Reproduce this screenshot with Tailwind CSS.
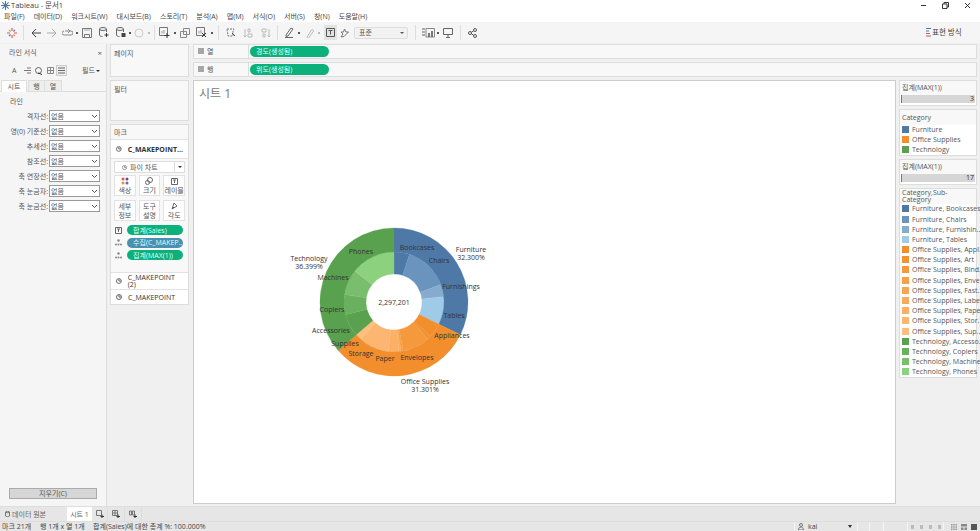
<!DOCTYPE html>
<html lang="ko">
<head>
    <meta charset="UTF-8">
    <meta name="viewport" content="width=device-width, initial-scale=1.0">
    <title>Tableau - 문서1</title>
    <script src="https://cdn.jsdelivr.net/npm/@tailwindcss/browser@4"></script>
</head>
<body class="w-[980px] h-[531px] overflow-hidden flex flex-col bg-[#f0f0f0] text-[7px] leading-none text-[#555] font-['Open_Sans','Noto_Sans_CJK_KR',sans-serif]">

    <!-- title bar -->
    <div class="h-[11px] bg-white flex items-center pl-[1px] shrink-0 relative">
        <svg class="w-[9px] h-[9px]" viewBox="0 0 10 10" fill="none" stroke="#4e79a7" stroke-width="1.2"><path d="M5 0v10M0 5h10M1.5 1.5l7 7M8.5 1.5l-7 7"/></svg>
        <span class="ml-[1px] text-[7.5px] text-[#444]">Tableau - 문서1</span>
        <div class="ml-auto flex items-center gap-[15px] pr-[9px] text-[#333]">
            <svg class="w-[7px] h-[7px]" viewBox="0 0 7 7" stroke="currentColor"><path d="M1 3.5h5"/></svg>
            <svg class="w-[7px] h-[7px]" viewBox="0 0 7 7" stroke="currentColor" fill="none"><path d="M.5 2h4.500v4.500h-4.500zM2 2V.5h4.500V5H5"/></svg>
            <svg class="w-[7px] h-[7px]" viewBox="0 0 7 7" stroke="currentColor"><path d="M1 1l5 5M6 1l-5 5"/></svg>
        </div>
    </div>

    <!-- menu -->
    <div class="h-[11px] bg-white flex items-center gap-[9px] pl-[4px] shrink-0 text-[7px] text-[#444]">
        <span>파일(F)</span><span>데이터(D)</span><span>워크시트(W)</span><span>대시보드(B)</span><span>스토리(T)</span><span>분석(A)</span><span>맵(M)</span><span>서식(O)</span><span>서버(S)</span><span>창(N)</span><span>도움말(H)</span>
    </div>

    <!-- toolbar -->
    <div class="h-[21px] bg-[#f5f5f5] flex items-center shrink-0 relative text-[#777]">
        <svg class="w-[10px] h-[10px] ml-[7px]" viewBox="0 0 10 10" stroke-width="1.200" fill="none"><path d="M5 0v3M5 7v3M0 5h3M7 5h3" stroke="#e15759"/><path d="M2 2l1.500 1.500M8 8L6.500 6.500" stroke="#f28e2b"/><path d="M8 2L6.500 3.500M2 8l1.500-1.500" stroke="#4e79a7"/></svg>
        <div class="w-px h-[15px] bg-[#ddd] ml-[6px]"></div>
        <svg class="w-[10px] h-[10px] ml-[7px]" viewBox="0 0 10 10" fill="none" stroke="#444"><path d="M10 5H1M5 1L1 5l4 4"/></svg>
        <svg class="w-[10px] h-[10px] ml-[6px]" viewBox="0 0 10 10" fill="none" stroke="#aaa"><path d="M0 5h9M5 1l4 4-4 4"/></svg>
        <svg class="w-[11px] h-[10px] ml-[5px]" viewBox="0 0 11 10" fill="none" stroke="#888"><path d="M3 3H9a1.500 1.500 0 010 4H2a1.500 1.500 0 010-4M6 1l2 2-2 2"/></svg>
        <span class="w-[2px] h-[2px] bg-[#555] ml-[3px]"></span>
        <svg class="w-[10px] h-[10px] ml-[4px]" viewBox="0 0 10 10" fill="none" stroke="#777"><path d="M.5.5h9v9h-9zM2.500 6.500h5v3h-5z"/><path d="M2 2h6" stroke="#aaa"/></svg>
        <svg class="w-[10px] h-[11px] ml-[7px]" viewBox="0 0 10 11" fill="none" stroke="#666"><ellipse cx="4" cy="2" rx="3.500" ry="1.500"/><path d="M.5 2v6c0 1 1.500 1.500 3 1.500M7.500 2v3"/><path d="M7.500 6v4M5.500 8h4" stroke="#333"/></svg>
        <svg class="w-[10px] h-[11px] ml-[7px]" viewBox="0 0 10 11" fill="none" stroke="#666"><ellipse cx="4" cy="2" rx="3.500" ry="1.500"/><path d="M.5 2v6c0 1 1.500 1.500 3 1.500M7.500 2v3"/><path d="M5.500 6h4v4h-4z" fill="#444" stroke="none"/></svg>
        <span class="w-[2px] h-[2px] bg-[#555] ml-[3px]"></span>
        <svg class="w-[10px] h-[10px] ml-[3px]" viewBox="0 0 10 10" fill="none" stroke="#ccc"><circle cx="5" cy="5" r="4"/></svg>
        <span class="w-[2px] h-[2px] bg-[#bbb] ml-[4px]"></span>
        <div class="w-px h-[15px] bg-[#ddd] ml-[4px]"></div>
        <svg class="w-[11px] h-[11px] ml-[4px]" viewBox="0 0 11 11" fill="none" stroke="#777"><path d="M.5.5h8v8h-8z"/><path d="M3 6.500V4M5 6.500V3" stroke="#999"/><path d="M8 6v5M5.500 8.500h5" stroke="#333"/></svg>
        <span class="w-[2px] h-[2px] bg-[#555] ml-[4px]"></span>
        <svg class="w-[10px] h-[10px] ml-[4px]" viewBox="0 0 10 10" fill="none" stroke="#888"><path d="M3.500.5h6v6h-6zM.5 3.500h6v6h-6z"/></svg>
        <svg class="w-[11px] h-[11px] ml-[6px]" viewBox="0 0 11 11" fill="none" stroke="#777"><path d="M.5.5h8v8h-8z"/><path d="M3 6.500V4M5 6.500V3" stroke="#999"/><path d="M6 6l4 4M10 6l-4 4" stroke="#333"/></svg>
        <span class="w-[2px] h-[2px] bg-[#555] ml-[4px]"></span>
        <div class="w-px h-[15px] bg-[#ddd] ml-[5px]"></div>
        <svg class="w-[10px] h-[10px] ml-[7px]" viewBox="0 0 10 10" fill="none" stroke="#777"><path d="M1 1h7l-1 2v5H2z" stroke-dasharray="2 1"/><path d="M6 5l3 3" stroke="#444"/></svg>
        <svg class="w-[10px] h-[10px] ml-[7px]" viewBox="0 0 10 10" fill="none" stroke="#bbb"><path d="M2 1v8M.5 7.500L2 9l1.500-1.500M5 1h2v3H5zM5 6h4v3H5z"/></svg>
        <svg class="w-[10px] h-[10px] ml-[8px]" viewBox="0 0 10 10" fill="none" stroke="#bbb"><path d="M8 1v8M6.500 7.500L8 9l1.500-1.500M1 1h4v3H1zM2 6h2v3H2z"/></svg>
        <div class="w-px h-[15px] bg-[#ddd] ml-[6px]"></div>
        <svg class="w-[11px] h-[11px] ml-[6px]" viewBox="0 0 11 11" fill="none" stroke="#666"><path d="M2 8L7 1l2 1-5 7-2 .5zM1 10.500h8"/></svg>
        <span class="w-[2px] h-[2px] bg-[#555] ml-[3px]"></span>
        <svg class="w-[10px] h-[10px] ml-[4px]" viewBox="0 0 10 10" fill="none" stroke="#bbb"><path d="M3 9L7.500 2a1.200 1.200 0 012 1L5 9.500a1 1 0 01-2-.5z"/></svg>
        <span class="w-[2px] h-[2px] bg-[#bbb] ml-[4px]"></span>
        <div class="w-[13px] h-[15px] bg-[#e2e2e2] ml-[4px] flex items-center justify-center">
            <svg class="w-[9px] h-[9px]" viewBox="0 0 9 9" fill="none" stroke="#555"><path d="M.5.500h8v8h-8zM2.500 2.500h4M4.500 2.500v4"/></svg>
        </div>
        <svg class="w-[9px] h-[10px] ml-[3px]" viewBox="0 0 9 10" fill="none" stroke="#777"><path d="M4.500 1L6 4h2.500L6.500 6 4 8.500 1 9l2-3-2-2h2.500z"/></svg>
        <div class="w-[54px] h-[12px] ml-[5px] border border-[#ddd] rounded-[2px] bg-[#f2f2f2] flex items-center pl-[4px] pr-[3px] text-[#555]">표준<span class="ml-auto w-0 h-0 border-x-[2px] border-x-transparent border-t-[2px] border-t-[#555]"></span></div>
        <div class="w-px h-[15px] bg-[#ddd] ml-[7px]"></div>
        <svg class="w-[13px] h-[10px] ml-[6px]" viewBox="0 0 13 10" fill="#aaa"><path d="M0 0h3v2H0zM0 3h3v2H0zM0 6h3v2H0z"/><path d="M4 .5h8.500v8.500H4z" fill="none" stroke="#888"/><path d="M6 5h2v4H6zM9 3h2v6H9z" fill="#777"/></svg>
        <span class="w-[2px] h-[2px] bg-[#555] ml-[2px]"></span>
        <svg class="w-[10px] h-[10px] ml-[4px]" viewBox="0 0 10 10" fill="none" stroke="#666"><path d="M.5.500h9v6h-9zM5 6.500v3M3 9.500h4"/></svg>
        <div class="w-px h-[15px] bg-[#ddd] ml-[7px]"></div>
        <svg class="w-[9px] h-[10px] ml-[7px]" viewBox="0 0 9 10" fill="none" stroke="#555"><circle cx="2" cy="5" r="1.500"/><circle cx="7" cy="2" r="1.500"/><circle cx="7" cy="8" r="1.500"/><path d="M3.300 4.300L5.700 2.700M3.300 5.700l2.400 1.600"/></svg>
        <svg class="w-[5px] h-[9px] ml-[449px]" viewBox="0 0 5 9"><path d="M0 0h5v1H0z" fill="#4e79a7"/><path d="M0 2.500h3v1H0z" fill="#4e79a7"/><path d="M0 5h4v1H0z" fill="#e15759"/><path d="M0 7.500h5v1H0z" fill="#777"/></svg>
        <span class="ml-[1px] text-[7.5px] text-[#444]">표현 방식</span>
    </div>

    <!-- main area -->
    <div class="flex-1 min-h-0 flex pt-px">
        <!-- format lines panel -->
        <div class="w-[107px] shrink-0 bg-[#f5f5f5] border-r border-[#ddd] flex flex-col pb-[7px]">
            <div class="h-[15px] flex items-center pl-[9px] pr-[4px] mt-[1px] text-[#555]">라인 서식<span class="ml-auto text-[8px]">×</span></div>
            <div class="h-[19px] flex items-center pl-[12px] pr-[6px] mt-[1px]">
                <span class="w-[11px]">A</span>
                <svg class="w-[7px] h-[7px] ml-[1px]" viewBox="0 0 7 7" stroke="#777"><path d="M3 1h4M0 3.500h7M3 6h4"/></svg>
                <svg class="w-[8px] h-[8px] ml-[4px]" viewBox="0 0 8 8" fill="none" stroke="#666"><circle cx="3.500" cy="3.500" r="3"/><path d="M3 6l4 1.500" stroke="#333"/></svg>
                <svg class="w-[7px] h-[7px] ml-[4px]" viewBox="0 0 7 7" fill="none" stroke="#888"><path d="M.5.500h6v6h-6zM3.500.5v6M.5 3.500h6"/></svg>
                <span class="w-[11px] h-[11px] ml-[2px] border border-[#ccc] bg-[#eee] flex items-center justify-center"><svg class="w-[7px] h-[7px]" viewBox="0 0 7 7" stroke="#666"><path d="M0 1h7M0 3.500h7M0 6h7"/></svg></span>
                <span class="ml-auto flex items-center gap-px">필드<span class="w-0 h-0 border-x-[2px] border-x-transparent border-t-[2px] border-t-[#333]"></span></span>
            </div>
            <div class="h-[12px] flex items-end border-b border-[#ddd] pl-px">
                <span class="w-[26px] h-[12px] bg-white border-x border-t border-[#ddd] flex items-center justify-center -mb-px">시트</span>
                <span class="w-[17px] h-[11px] ml-px bg-[#eee] border-x border-t border-[#ddd] flex items-center justify-center">행</span>
                <span class="w-[17px] h-[11px] bg-[#eee] border-r border-t border-[#ddd] flex items-center justify-center">열</span>
            </div>
            <div class="pl-[10px] pt-[6px] text-[#555]">라인</div>
            <div id="lineRows" class="flex flex-col gap-[3px] mt-[5px]"></div>
            <div class="mt-auto mx-[9px] h-[11px] bg-[#d6d6d6] border border-[#aaa] flex items-center justify-center">지우기(C)</div>
        </div>

        <!-- pages / filters / marks -->
        <div class="w-[79px] ml-[3px] shrink-0 flex flex-col gap-[3px]">
            <div class="h-[33px] bg-[#f8f8f8] border border-[#ddd] pl-[3px] pt-[5px]">페이지</div>
            <div class="h-[41px] bg-[#f8f8f8] border border-[#ddd] pl-[3px] pt-[5px]">필터</div>
            <div class="h-[181px] bg-[#f8f8f8] border border-[#ddd] flex flex-col">
                <div class="h-[14px] pl-[3px] flex items-center">마크</div>
                <div class="h-[20px] border-t border-b border-[#e2e2e2] flex items-center px-[5px] bg-white">
                    <svg class="w-[6px] h-[6px]" viewBox="0 0 6 6" fill="none" stroke="#666"><circle cx="3" cy="3" r="2.500"/><path d="M3 3V1M3 3h2"/></svg>
                    <span class="ml-[6px] font-bold text-[#333]">C_MAKEPOINT...</span>
                </div>
                <div class="h-[12px] mx-[3px] mt-[2px] bg-white border border-[#ddd] flex items-center pl-[7px]">
                    <svg class="w-[5px] h-[5px]" viewBox="0 0 6 6" fill="none" stroke="#888"><circle cx="3" cy="3" r="2.500"/><path d="M3 3V1M3 3h2"/></svg>
                    <span class="ml-[3px]">파이 차트</span>
                    <span class="ml-auto w-[10px] h-full border-l border-[#ddd] flex items-center justify-center"><span class="w-0 h-0 border-x-[2px] border-x-transparent border-t-[2px] border-t-[#333]"></span></span>
                </div>
                <div class="grid grid-cols-3 gap-x-[3px] gap-y-[4px] mx-[3px] mt-[2px] text-center">
                    <div class="h-[21px] bg-white border border-[#e2e2e2] flex flex-col items-center justify-center gap-[2px]">
                        <svg class="w-[8px] h-[8px]" viewBox="0 0 8 8"><circle cx="2" cy="2" r="1.500" fill="#e15759"/><circle cx="6" cy="2" r="1.500" fill="#76428a"/><circle cx="2" cy="6" r="1.500" fill="#f28e2b"/><circle cx="6" cy="6" r="1.500" fill="#4e79a7"/></svg>
                        색상
                    </div>
                    <div class="h-[21px] bg-white border border-[#e2e2e2] flex flex-col items-center justify-center gap-[2px]">
                        <svg class="w-[8px] h-[8px]" viewBox="0 0 8 8" fill="none" stroke="#666"><circle cx="5" cy="3" r="2.500"/><circle cx="2.500" cy="5.500" r="2"/></svg>
                        크기
                    </div>
                    <div class="h-[21px] bg-white border border-[#e2e2e2] flex flex-col items-center justify-center gap-[2px]">
                        <svg class="w-[7px] h-[7px]" viewBox="0 0 7 7" fill="none" stroke="#666"><path d="M.5.500h6v6h-6zM2 2h3M3.500 2v3"/></svg>
                        레이블
                    </div>
                    <div class="h-[21px] bg-white border border-[#e2e2e2] flex items-center justify-center leading-[9px]">세부<br>정보</div>
                    <div class="h-[21px] bg-white border border-[#e2e2e2] flex items-center justify-center leading-[9px]">도구<br>설명</div>
                    <div class="h-[21px] bg-white border border-[#e2e2e2] flex flex-col items-center justify-center gap-[2px]">
                        <svg class="w-[7px] h-[8px]" viewBox="0 0 7 8" fill="none" stroke="#666"><path d="M1 7L3 1l3 3zM1 7l2-2"/></svg>
                        각도
                    </div>
                </div>
                <div class="flex flex-col gap-[2.500px] mt-[4px] ml-[4px]">
                    <div class="flex items-center">
                        <svg class="w-[7px] h-[7px]" viewBox="0 0 7 7" fill="none" stroke="#666"><path d="M.5.500h6v6h-6zM2 2h3M3.500 2v3"/></svg>
                        <span class="ml-[5px] w-[56px] h-[10px] rounded-full bg-[#0bb07b] text-[#dff] pl-[6px] flex items-center">합계(Sales)</span>
                    </div>
                    <div class="flex items-center">
                        <svg class="w-[7px] h-[7px]" viewBox="0 0 7 7" fill="#888"><circle cx="3.500" cy="1.500" r="1.200"/><circle cx="1" cy="5.500" r="1"/><circle cx="3.500" cy="5.500" r="1"/><circle cx="6" cy="5.500" r="1"/></svg>
                        <span class="ml-[5px] w-[56px] h-[10px] rounded-full bg-[#4a90b0] text-[#dff] pl-[6px] flex items-center">수집(C_MAKEP..</span>
                    </div>
                    <div class="flex items-center">
                        <svg class="w-[7px] h-[7px]" viewBox="0 0 7 7" fill="#888"><circle cx="3.500" cy="1.500" r="1.200"/><circle cx="1" cy="5.500" r="1"/><circle cx="3.500" cy="5.500" r="1"/><circle cx="6" cy="5.500" r="1"/></svg>
                        <span class="ml-[5px] w-[56px] h-[10px] rounded-full bg-[#0bb07b] text-[#dff] pl-[6px] flex items-center">집계(MAX(1))</span>
                    </div>
                </div>
                <div class="mt-auto h-[17px] border-t border-[#e2e2e2] flex items-center px-[5px] bg-white">
                    <svg class="w-[6px] h-[6px]" viewBox="0 0 6 6" fill="none" stroke="#666"><circle cx="3" cy="3" r="2.500"/><path d="M3 3V1M3 3h2"/></svg>
                    <span class="ml-[6px] text-[#333]">C_MAKEPOINT (2)</span>
                </div>
                <div class="h-[15px] border-t border-[#e2e2e2] flex items-center px-[5px] bg-white">
                    <svg class="w-[6px] h-[6px]" viewBox="0 0 6 6" fill="none" stroke="#666"><circle cx="3" cy="3" r="2.500"/><path d="M3 3V1M3 3h2"/></svg>
                    <span class="ml-[6px] text-[#333]">C_MAKEPOINT</span>
                </div>
            </div>
        </div>

        <!-- shelves + sheet + legends -->
        <div class="flex-1 min-w-0 ml-[4px] mr-[3px] flex flex-col gap-[3px]">
            <div class="h-[15px] bg-[#f8f8f8] border border-[#ddd] flex items-center">
                <div class="w-[55px] h-full border-r border-[#ddd] flex items-center pl-[4px]">
                    <svg class="w-[6px] h-[6px]" viewBox="0 0 6 6" stroke="#555"><path d="M1 0v6M3 0v6M5 0v6"/></svg>
                    <span class="ml-[3px]">열</span>
                </div>
                <span class="ml-[1px] w-[79px] h-[11px] rounded-full bg-[#0bb07b] text-[#dff] pl-[6px] flex items-center">경도(생성됨)</span>
            </div>
            <div class="h-[15px] bg-[#f8f8f8] border border-[#ddd] flex items-center">
                <div class="w-[55px] h-full border-r border-[#ddd] flex items-center pl-[4px]">
                    <svg class="w-[6px] h-[6px]" viewBox="0 0 6 6" stroke="#555"><path d="M0 1h6M0 3h6M0 5h6"/></svg>
                    <span class="ml-[3px]">행</span>
                </div>
                <span class="ml-[1px] w-[79px] h-[11px] rounded-full bg-[#0bb07b] text-[#dff] pl-[6px] flex items-center">위도(생성됨)</span>
            </div>
            <div class="h-[427px] flex gap-[3px]">
                <div class="w-[703px] h-[424px] bg-white border border-[#ccc] relative">
                    <div class="pl-[5px] pt-[7px] text-[12px] text-[#777]">시트 1</div>
                    <svg id="donut" class="absolute inset-0 w-[701px] h-[422px]" viewBox="193 80 701 422"></svg>
                </div>
                <div class="flex-1 min-w-0 flex flex-col gap-[3px]">
                    <div class="h-[26px] bg-white border border-[#ddd] flex flex-col">
                        <div class="h-[14px] pl-[2px] flex items-center bg-[#f8f8f8]">집계(MAX(1))</div>
                        <div class="mx-[1px] h-[8px] bg-[#d6d6d6] border-l border-[#777] flex items-center justify-end pr-[1px] text-[#333]">3</div>
                    </div>
                    <div class="h-[47px] bg-white border border-[#ddd] flex flex-col">
                        <div class="h-[16px] pl-[2px] flex items-center bg-[#f8f8f8]">Category</div>
                        <div id="catLegend" class="flex flex-col"></div>
                    </div>
                    <div class="h-[26px] bg-white border border-[#ddd] flex flex-col">
                        <div class="h-[14px] pl-[2px] flex items-center bg-[#f8f8f8]">집계(MAX(1))</div>
                        <div class="mx-[1px] h-[8px] bg-[#d6d6d6] border-l border-[#777] flex items-center justify-end pr-[1px] text-[#333]">17</div>
                    </div>
                    <div class="h-[190px] bg-white border border-[#ddd] flex flex-col">
                        <div class="h-[16px] pl-[2px] flex items-center bg-[#f8f8f8]">Category,Sub-Category</div>
                        <div id="subLegend" class="flex flex-col"></div>
                    </div>
                </div>
            </div>
        </div>
    </div>

    <!-- sheet tabs -->
    <div class="h-[15px] shrink-0 bg-[#e6e6e6] flex items-center border-t border-[#ddd]">
        <svg class="w-[5px] h-[6px] ml-[5px]" viewBox="0 0 5 6" fill="none" stroke="#777"><ellipse cx="2.500" cy="1" rx="2" ry=".7"/><path d="M.5 1v4c0 .8 4 .8 4 0V1"/></svg>
        <span class="ml-[2px] text-[#666]">데이터 원본</span>
        <div class="w-[25px] h-full ml-[21px] bg-white flex items-center justify-center text-[#666]">시트 1</div>
        <div class="w-[16px] h-full border-r border-[#ddd] flex items-center justify-center"><svg class="w-[8px] h-[8px]" viewBox="0 0 8 8" fill="none" stroke="#777"><path d="M.5.500h5v5h-5z"/><path d="M6 4.500v3.500M4.500 6.500H8" stroke="#333"/></svg></div>
        <div class="w-[17px] h-full border-r border-[#ddd] flex items-center justify-center"><svg class="w-[8px] h-[8px]" viewBox="0 0 8 8" fill="none" stroke="#777"><path d="M.5.500h5v5h-5zM3 .5v5M.5 3h5"/><path d="M6 4.500v3.500M4.500 6.500H8" stroke="#333"/></svg></div>
        <div class="w-[17px] h-full border-r border-[#ddd] flex items-center justify-center"><svg class="w-[8px] h-[8px]" viewBox="0 0 8 8" fill="none" stroke="#777"><path d="M.5 1h2v4h-2zM3.500 1h2v4h-2z"/><path d="M6 4.500v3.500M4.500 6.500H8" stroke="#333"/></svg></div>
    </div>

    <!-- status bar -->
    <div class="h-[10px] shrink-0 bg-[#e6e6e6] flex items-center border-t border-[#ddd] pl-[2px] text-[#444]">
        <span class="w-[38px]">마크 21개</span>
        <span class="w-[53px]">행 1개 x 열 1개</span>
        <span>합계(Sales)에 대한 총계 %: 100.000%</span>
        <div class="ml-auto flex items-center h-full">
            <div class="w-[64px] h-full border-x border-[#f5f5f5] flex items-center pl-[3px]">
                <svg class="w-[6px] h-[7px]" viewBox="0 0 6 7" fill="none" stroke="#777"><circle cx="3" cy="2" r="1.500"/><path d="M.5 7c0-4 5-4 5 0z"/></svg>
                <span class="ml-[4px]">kai</span>
                <span class="ml-auto mr-[5px] w-0 h-0 border-x-[2.500px] border-x-transparent border-t-[3px] border-t-[#333]"></span>
            </div>
            <div class="w-[12px] h-full border-r border-[#f5f5f5]"></div>
            <div class="w-[14px] h-full border-r border-[#f5f5f5]"></div>
            <div class="w-[24px] h-full border-r border-[#f5f5f5]"></div>
            <div class="w-[36px] h-full flex items-center justify-center gap-[6px] border-r border-[#f5f5f5]">
                <span class="w-[3px] h-[4px] bg-[#bbb]"></span><span class="w-[3px] h-[4px] bg-[#bbb]"></span><span class="w-[3px] h-[4px] bg-[#bbb]"></span><span class="w-[3px] h-[4px] bg-[#bbb]"></span>
            </div>
            <div class="w-[36px] h-full flex items-center justify-center gap-[4px] pl-[3px]">
                <svg class="w-[6px] h-[6px]" viewBox="0 0 6 6" fill="#999"><path d="M0 0h1.500v1.500H0zM2.200 0h1.500v1.500H2.200zM4.500 0H6v1.500H4.500zM0 2.200h1.500v1.500H0zM2.200 2.200h1.500v1.500H2.200zM4.500 2.200H6v1.500H4.500zM0 4.500h1.500V6H0zM2.200 4.500h1.500V6H2.200zM4.500 4.500H6V6H4.500z"/></svg>
                <svg class="w-[6px] h-[6px]" viewBox="0 0 6 6" fill="#888"><path d="M0 0h6v2.500H0zM0 3.500h2.500V6H0zM3.500 3.500H6V6H3.500z"/></svg>
                <span class="w-[6px] h-[6px] bg-[#555]"></span>
            </div>
        </div>
    </div>

    <script>
        // line format rows
        const lineLabels = ['격자선:', '영(0) 기준선:', '추세선:', '참조선:', '축 연장선:', '축 눈금자:', '축 눈금선:'];
        const lineRows = document.getElementById('lineRows');
        lineLabels.forEach(label => {
            const row = document.createElement('div');
            row.className = 'flex items-center h-[12px]';
            row.innerHTML = `
                <span class="w-[48px] text-right whitespace-nowrap">${label}</span>
                <span class="ml-px w-[51px] h-[12px] bg-white border border-[#999] flex items-center pl-[1px] pr-[2px]">없음
                    <svg class="ml-auto w-[5px] h-[3px]" viewBox="0 0 5 3" fill="none" stroke="#555"><path d="M0 0l2.500 2.500L5 0"/></svg>
                </span>`;
            lineRows.appendChild(row);
        });

        // Superstore sales by sub-category
        const categories = [
            { name: 'Furniture', color: '#4e79a7', subs: [
                ['Bookcases', 114880, '#4e79a7'], ['Chairs', 328449, '#6a94bd'],
                ['Furnishings', 91705, '#86abcf'], ['Tables', 206966, '#a0cbe8']
            ], legend: ['Furniture, Bookcases', 'Furniture, Chairs', 'Furniture, Furnishin..', 'Furniture, Tables'] },
            { name: 'Office Supplies', color: '#f28e2b', subs: [
                ['Appliances', 107532, '#f28e2b'], ['Art', 27119, '#f39233'], ['Binders', 203413, '#f5993d'],
                ['Envelopes', 16476, '#f69f47'], ['Fasteners', 3024, '#f8a552'], ['Labels', 12486, '#f9aa5c'],
                ['Paper', 78479, '#fbb066'], ['Storage', 223844, '#fcb671'], ['Supplies', 46674, '#ffbe7d']
            ], legend: ['Office Supplies, Appl..', 'Office Supplies, Art', 'Office Supplies, Bind..', 'Office Supplies, Enve..', 'Office Supplies, Fast..', 'Office Supplies, Labe..', 'Office Supplies, Paper', 'Office Supplies, Stor..', 'Office Supplies, Sup..'] },
            { name: 'Technology', color: '#59a14f', subs: [
                ['Accessories', 167380, '#59a14f'], ['Copiers', 149528, '#69b15f'],
                ['Machines', 189239, '#79be6d'], ['Phones', 330007, '#8cd17d']
            ], legend: ['Technology, Accesso..', 'Technology, Copiers', 'Technology, Machines', 'Technology, Phones'] }
        ];

        function legendRow(color, text, h) {
            return `<div class="flex items-center pl-[2px] ${h}"><span class="w-[7px] h-[7px] shrink-0" style="background:${color}"></span><span class="ml-[3px] whitespace-nowrap">${text}</span></div>`;
        }
        document.getElementById('catLegend').innerHTML = categories.map(c => legendRow(c.color, c.name, 'h-[10px]')).join('');
        document.getElementById('subLegend').innerHTML = categories.flatMap(c =>
            c.subs.map((s, i) => legendRow(s[2], c.legend[i], 'h-[10.2px]'))).join('');

        // donut
        const cx = 393, cy = 301, total = 2297201;
        const point = (r, deg) => {
            const a = deg * Math.PI / 180;
            return [cx + r * Math.sin(a), cy - r * Math.cos(a)].map(n => n.toFixed(2)).join(' ');
        };
        const arc = (r1, r2, a1, a2) => {
            const big = a2 - a1 > 180 ? 1 : 0;
            return `M${point(r2, a1)}A${r2} ${r2} 0 ${big} 1 ${point(r2, a2)}L${point(r1, a2)}A${r1} ${r1} 0 ${big} 0 ${point(r1, a1)}Z`;
        };
        let svg = '', start = 0;
        categories.forEach(c => {
            const catStart = start;
            c.subs.forEach(s => {
                const sweep = s[1] / total * 360;
                svg += `<path d="${arc(28, 50, start, start + sweep)}" fill="${s[2]}" stroke="${s[2]}" stroke-width="0.3"/>`;
                start += sweep;
            });
            svg += `<path d="${arc(50, 74, catStart, start)}" fill="${c.color}" stroke="${c.color}" stroke-width="0.3"/>`;
        });
        const labels = [
            ['Furniture', 470, 248], ['32.300%', 470, 256], ['Technology', 308, 257], ['36.399%', 308, 265],
            ['Office Supplies', 424, 380], ['31.301%', 424, 388], ['Bookcases', 416, 246], ['Chairs', 438, 259],
            ['Furnishings', 460, 285], ['Tables', 453, 314], ['Appliances', 451, 334], ['Envelopes', 416, 356],
            ['Paper', 384, 357], ['Storage', 360, 352], ['Supplies', 344, 342], ['Accessories', 330, 329],
            ['Copiers', 331, 308], ['Machines', 332, 276], ['Phones', 360, 250], ['2,297,201', 393, 301]
        ];
        labels.forEach(([t, x, y]) => {
            svg += `<text x="${x}" y="${y + 2.500}" text-anchor="middle" font-size="7" fill="#333">${t}</text>`;
        });
        document.getElementById('donut').innerHTML = svg;
    </script>
</body>
</html>
